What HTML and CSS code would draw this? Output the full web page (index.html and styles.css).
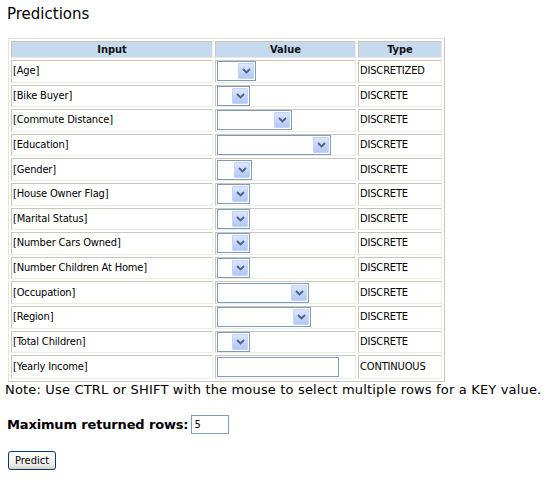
FILE: index.html
```html
<!DOCTYPE html>
<html>
<head>
<meta charset="utf-8">
<link rel="stylesheet" href="styles.css">
</head>
<body>
<h1 class="title">Predictions</h1>
<table class="grid">
  <tr class="head"><th class="c-input">Input</th><th class="c-value">Value</th><th class="c-type">Type</th></tr>
  <tr><td>[Age]</td><td><span class="sel w39"><span class="btn"><svg viewBox="0 0 9 6" width="9" height="6"><path d="M1 1 L4.5 4.5 L8 1" fill="none" stroke="#4d6185" stroke-width="1.8"/></svg></span></span></td><td>DISCRETIZED</td></tr>
  <tr><td>[Bike Buyer]</td><td><span class="sel w33"><span class="btn"><svg viewBox="0 0 9 6" width="9" height="6"><path d="M1 1 L4.5 4.5 L8 1" fill="none" stroke="#4d6185" stroke-width="1.8"/></svg></span></span></td><td>DISCRETE</td></tr>
  <tr><td>[Commute Distance]</td><td><span class="sel w75"><span class="btn"><svg viewBox="0 0 9 6" width="9" height="6"><path d="M1 1 L4.5 4.5 L8 1" fill="none" stroke="#4d6185" stroke-width="1.8"/></svg></span></span></td><td>DISCRETE</td></tr>
  <tr><td>[Education]</td><td><span class="sel w114"><span class="btn"><svg viewBox="0 0 9 6" width="9" height="6"><path d="M1 1 L4.5 4.5 L8 1" fill="none" stroke="#4d6185" stroke-width="1.8"/></svg></span></span></td><td>DISCRETE</td></tr>
  <tr><td>[Gender]</td><td><span class="sel w35"><span class="btn"><svg viewBox="0 0 9 6" width="9" height="6"><path d="M1 1 L4.5 4.5 L8 1" fill="none" stroke="#4d6185" stroke-width="1.8"/></svg></span></span></td><td>DISCRETE</td></tr>
  <tr><td>[House Owner Flag]</td><td><span class="sel w33"><span class="btn"><svg viewBox="0 0 9 6" width="9" height="6"><path d="M1 1 L4.5 4.5 L8 1" fill="none" stroke="#4d6185" stroke-width="1.8"/></svg></span></span></td><td>DISCRETE</td></tr>
  <tr><td>[Marital Status]</td><td><span class="sel w33"><span class="btn"><svg viewBox="0 0 9 6" width="9" height="6"><path d="M1 1 L4.5 4.5 L8 1" fill="none" stroke="#4d6185" stroke-width="1.8"/></svg></span></span></td><td>DISCRETE</td></tr>
  <tr><td>[Number Cars Owned]</td><td><span class="sel w33"><span class="btn"><svg viewBox="0 0 9 6" width="9" height="6"><path d="M1 1 L4.5 4.5 L8 1" fill="none" stroke="#4d6185" stroke-width="1.8"/></svg></span></span></td><td>DISCRETE</td></tr>
  <tr><td>[Number Children At Home]</td><td><span class="sel w33"><span class="btn"><svg viewBox="0 0 9 6" width="9" height="6"><path d="M1 1 L4.5 4.5 L8 1" fill="none" stroke="#4d6185" stroke-width="1.8"/></svg></span></span></td><td>DISCRETE</td></tr>
  <tr><td>[Occupation]</td><td><span class="sel w92"><span class="btn"><svg viewBox="0 0 9 6" width="9" height="6"><path d="M1 1 L4.5 4.5 L8 1" fill="none" stroke="#4d6185" stroke-width="1.8"/></svg></span></span></td><td>DISCRETE</td></tr>
  <tr><td>[Region]</td><td><span class="sel w94"><span class="btn"><svg viewBox="0 0 9 6" width="9" height="6"><path d="M1 1 L4.5 4.5 L8 1" fill="none" stroke="#4d6185" stroke-width="1.8"/></svg></span></span></td><td>DISCRETE</td></tr>
  <tr><td>[Total Children]</td><td><span class="sel w33"><span class="btn"><svg viewBox="0 0 9 6" width="9" height="6"><path d="M1 1 L4.5 4.5 L8 1" fill="none" stroke="#4d6185" stroke-width="1.8"/></svg></span></span></td><td>DISCRETE</td></tr>
  <tr class="last"><td>[Yearly Income]</td><td><span class="txt w122"></span></td><td>CONTINUOUS</td></tr>
</table>
<p class="note">Note: Use CTRL or SHIFT with the mouse to select multiple rows for a KEY value.</p>
<div class="maxrow"><span class="lbl">Maximum returned rows:</span><span class="num">5</span></div>
<div class="actions"><span class="predict">Predict</span></div>
</body>
</html>
```
FILE: styles.css
```css
html, body { margin: 0; padding: 0; background: #fff; }
body { padding: 5px 0 0 7px; font-family: "DejaVu Sans", Verdana, sans-serif; color: #000; }
.title { margin: 0; font-size: 15px; font-weight: normal; line-height: 18px; height: 33px; }
.grid {
  margin-left: 1px;
  border-collapse: separate;
  border-spacing: 2px;
  border: 1px solid;
  border-color: #e4e2da #c9c6bc #c9c6bc #e4e2da;
  font-family: "DejaVu Sans Condensed", Tahoma, sans-serif;
  font-size: 11px;
  letter-spacing: -0.15px;
}
.grid th, .grid td {
  border: 1px solid;
  border-color: #c9c6bc #ecebe4 #ecebe4 #c9c6bc;
  padding: 0 1px;
  text-align: left;
  vertical-align: middle;
}
.grid th {
  background: #c6daef;
  text-align: center;
  font-weight: bold;
  height: 15px;
  line-height: 15px;
  color: #111;
  letter-spacing: 0;
}
.grid td { height: 20.6px; padding-top: 0; padding-bottom: 0; line-height: 14px; }
.grid tr.last td { height: 22px; }
.c-input { width: 198px; }
.c-value { width: 137px; }
.c-type { width: 80px; }
.sel, .txt {
  display: block;
  box-sizing: border-box;
  height: 20px;
  border: 1px solid #7f9db9;
  background: #fff;
  position: relative;
}
.btn {
  position: absolute;
  top: 1px; right: 1px; bottom: 1px;
  width: 16px;
  box-sizing: border-box;
  border: 1px solid #c3d3fd;
  border-radius: 1px;
  background: linear-gradient(#dce6fd, #c1d3fb 60%, #b4c8f6);
  display: flex;
  align-items: center;
  justify-content: center;
}
.btn svg { display: block; }
.w33 { width: 33px; }
.w35 { width: 35px; }
.w39 { width: 39px; }
.w75 { width: 75px; }
.w92 { width: 92px; }
.w94 { width: 94px; }
.w114 { width: 114px; }
.w122 { width: 122px; }
.note { margin: -1px 0 0 -2px; font-size: 13px; line-height: 17px; letter-spacing: 0.17px; }
.maxrow { margin-top: 17px; display: flex; align-items: center; gap: 3px; }
.lbl { font-size: 13px; font-weight: bold; letter-spacing: -0.15px; }
.num {
  display: inline-block; box-sizing: border-box; width: 38px; height: 19px;
  border: 1px solid #7f9db9; font-size: 11px; line-height: 17px; padding-left: 2px;
  font-family: "DejaVu Sans Condensed", Tahoma, sans-serif;
}
.actions { margin-top: 15px; padding-left: 1px; }
.predict {
  display: inline-block; box-sizing: border-box; height: 19px; padding: 0 6px;
  border: 1px solid #003c74; border-radius: 3px;
  background: linear-gradient(#ffffff, #f0f0ea 70%, #d6d0c5);
  font-family: "DejaVu Sans Condensed", Tahoma, sans-serif; font-size: 11px; line-height: 17px;
}
```
